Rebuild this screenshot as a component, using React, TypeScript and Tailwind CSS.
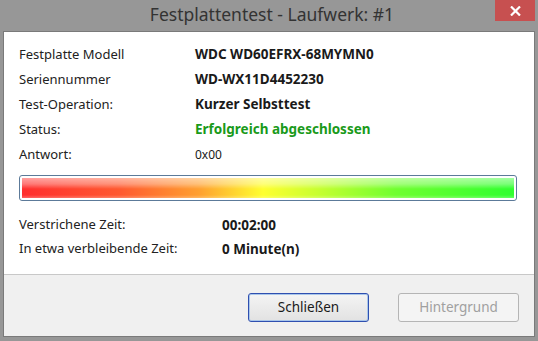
import React from "react";

const rows: { label: string; value: string; cls: string }[] = [
  { label: "Festplatte Modell", value: "WDC WD60EFRX-68MYMN0", cls: "font-bold text-[13.5px] text-[#1a1a1a]" },
  { label: "Seriennummer", value: "WD-WX11D4452230", cls: "font-bold text-[13.5px] text-[#1a1a1a]" },
  { label: "Test-Operation:", value: "Kurzer Selbsttest", cls: "font-bold text-[13.5px] text-[#1a1a1a]" },
  { label: "Status:", value: "Erfolgreich abgeschlossen", cls: "font-bold text-[13.5px] text-[#1a9a1a]" },
  { label: "Antwort:", value: "0x00", cls: "text-[#1a1a1a] text-[12px]" },
];

export default function App() {
  return (
    <div
      className="w-[538px] h-[341px] bg-[#979797] flex flex-col overflow-hidden"
      style={{ fontFamily: '"Noto Sans", "Open Sans", sans-serif' }}
    >
      {/* title bar */}
      <div className="relative h-[31px] flex items-center justify-center">
        <span className="text-[17.5px] text-[#333333] pb-[2px] pl-[6px]">Festplattentest - Laufwerk: #1</span>
        <div className="absolute right-[3px] top-0 w-[40px] h-[21px] bg-[#c75050] flex items-center justify-center">
          <svg width="11" height="10" viewBox="0 0 11 10">
            <path d="M1 0.5 L10 9.5 M10 0.5 L1 9.5" stroke="white" strokeWidth="2.2" />
          </svg>
        </div>
      </div>
      {/* body */}
      <div className="mx-[3px] mb-[4px] flex-1 border border-[#7a7a7a] flex flex-col bg-[#f0f0f0]">
        <div className="bg-white h-[243px] border-b border-[#c8c8c8] pt-[10px] px-[15px] text-[13px] text-[#1a1a1a]">
          <div className="flex flex-col">
            {rows.map((r) => (
              <div key={r.label} className="flex h-[25px] items-center">
                <div className="w-[176px] text-[#222]">{r.label}</div>
                <div className={r.cls}>{r.value}</div>
              </div>
            ))}
          </div>
          <div className="mt-[8px] h-[26px] w-[498px] rounded-[3px] border border-[#5c7a99] p-[2px] bg-white">
            <div
              className="h-full w-full relative"
              style={{
                background:
                  "linear-gradient(to right, #ff2e2e 0%, #ff5a30 20%, #ffa030 36%, #ffff30 49%, #c8ff30 60%, #70ff30 76%, #30ff30 100%)",
              }}
            >
              <div
                className="absolute inset-0"
                style={{
                  background:
                    "linear-gradient(to bottom, rgba(255,255,255,0.55) 0%, rgba(255,255,255,0.35) 30%, rgba(255,255,255,0) 55%, rgba(255,255,255,0) 85%, rgba(255,255,255,0.25) 100%)",
                }}
              />
            </div>
          </div>
          <div className="mt-[12px] flex flex-col">
            <div className="flex h-[24px] items-center">
              <div className="w-[203px] text-[#222]">Verstrichene Zeit:</div>
              <div className="font-bold text-[13.5px]">00:02:00</div>
            </div>
            <div className="flex h-[24px] items-center">
              <div className="w-[203px] text-[#222]">In etwa verbleibende Zeit:</div>
              <div className="font-bold text-[13.5px]">0 Minute(n)</div>
            </div>
          </div>
        </div>
        <div className="flex-1 flex items-start justify-end gap-[29px] pt-[18px] pr-[15px] text-[13.5px]">
          <button className="w-[121px] h-[29px] rounded-[3px] border border-[#2f4fb0] bg-gradient-to-b from-[#f4f4f4] to-[#e2e2e2] text-[#1a1a1a] shadow-[inset_0_0_0_1px_#a9c6ea]">
            Schließen
          </button>
          <button className="w-[121px] h-[29px] rounded-[3px] border border-[#b5b5b5] bg-[#f4f4f4] text-[#a0a0a0]">
            Hintergrund
          </button>
        </div>
      </div>
    </div>
  );
}
